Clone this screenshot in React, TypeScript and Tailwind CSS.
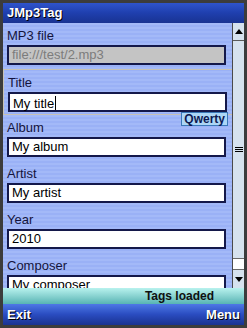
import React from "react";

const font = { fontFamily: '"Liberation Sans", Arial, sans-serif' };

interface FieldProps {
  label: string;
  value: string;
  disabled?: boolean;
  focused?: boolean;
}

function Field({ label, value, disabled = false, focused = false }: FieldProps) {
  return (
    <div
      className={`relative h-[46px] shrink-0 pt-[5px] pl-[4px] pr-[3px] ${
        focused ? "border-y border-l border-[#c8c2b4]" : ""
      }`}
    >
      <div className="text-[13px] leading-[16px] text-[#14143c]">{label}</div>
      <div
        className={`mt-[1px] h-[20px] w-[219px] border-2 border-[#14184a] px-[3px] text-[13px] leading-[16px] ${
          disabled ? "bg-[#c4c4c4] text-[#7c7c7c]" : "bg-white text-black"
        }`}
      >
        {value}
        {focused && (
          <span className="ml-[1px] inline-block h-[14px] w-[1px] translate-y-[2px] bg-black" />
        )}
      </div>
      {focused && (
        <div className="absolute right-[4px] top-[42px] z-10 h-[14px] border border-[#3a78b8] bg-[#acd6f6] px-[2px] text-[12px] font-bold leading-[12px] text-[#0c1850]">
          Qwerty
        </div>
      )}
    </div>
  );
}

function ArrowUp() {
  return (
    <svg width="8" height="5" viewBox="0 0 8 5">
      <path d="M0 5 L4 0 L8 5 Z" fill="#000" />
    </svg>
  );
}

function ArrowDown() {
  return (
    <svg width="8" height="5" viewBox="0 0 8 5">
      <path d="M0 0 L8 0 L4 5 Z" fill="#000" />
    </svg>
  );
}

export default function App() {
  return (
    <div
      className="flex h-[328px] w-[247px] flex-col bg-[#3c3c3c] p-[3px] pb-[3px]"
      style={font}
    >
      <div className="flex h-[20px] shrink-0 items-center bg-gradient-to-b from-[#2f54cc] via-[#1f3fae] to-[#193392] pl-[4px] text-[13px] font-bold text-white [text-shadow:1px_1px_0_#000]">
        JMp3Tag
      </div>

      <div className="flex h-[265px] shrink-0">
        <div className="flex w-[229px] flex-col overflow-hidden bg-[repeating-linear-gradient(to_bottom,#a3b9f8_0px,#a3b9f8_2px,#9ab1f6_2px,#9ab1f6_4px)]">
          <Field label="MP3 file" value="file:///test/2.mp3" disabled />
          <Field label="Title" value="My title" focused />
          <Field label="Album" value="My album" />
          <Field label="Artist" value="My artist" />
          <Field label="Year" value="2010" />
          <Field label="Composer" value="My composer" />
        </div>

        <div className="flex w-[12px] flex-col border-l border-[#4a4a4a] bg-[#d6e2ee]">
          <div className="flex h-[18px] shrink-0 items-center justify-center border-b border-[#5a5a5a]">
            <ArrowUp />
          </div>
          <div className="flex flex-1 items-center justify-center">
            <div className="flex w-[8px] flex-col gap-[1px]">
              <div className="h-[1px] bg-black" />
              <div className="h-[1px] bg-black" />
              <div className="h-[1px] bg-black" />
            </div>
          </div>
          <div className="h-[12px] shrink-0 border-y border-[#6a6a6a] bg-white" />
          <div className="flex h-[18px] shrink-0 items-center justify-center">
            <ArrowDown />
          </div>
        </div>
      </div>

      <div className="flex h-[16px] shrink-0 items-center justify-end bg-gradient-to-b from-[#b8f2ee] to-[#56b4b4] pr-[30px] text-[12px] font-bold text-[#101010]">
        Tags loaded
      </div>

      <div className="flex h-[21px] shrink-0 items-center justify-between bg-gradient-to-b from-[#4e78e6] via-[#2a4cc0] to-[#1a3290] px-[4px] text-[13px] font-bold text-white [text-shadow:1px_1px_0_#000]">
        <span>Exit</span>
        <span>Menu</span>
      </div>
    </div>
  );
}
